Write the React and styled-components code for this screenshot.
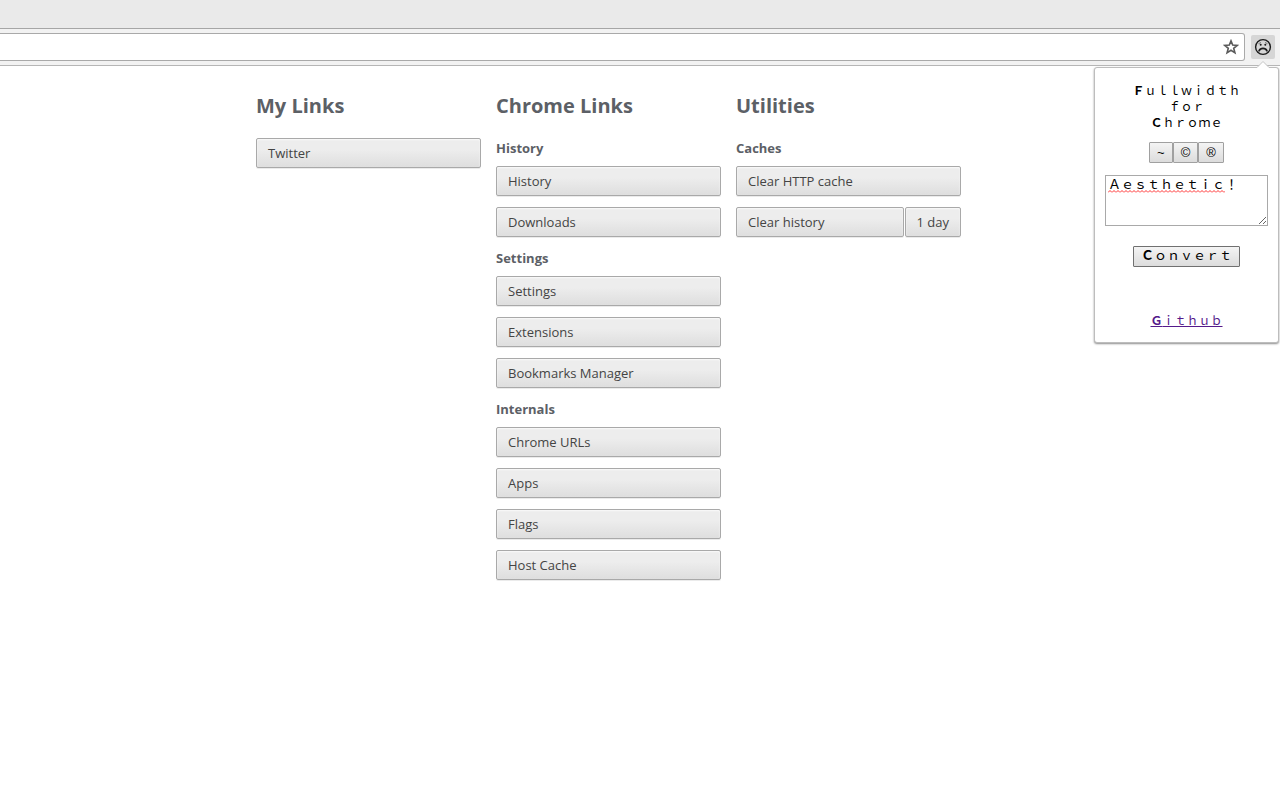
import { useState } from 'react';
import styled, { createGlobalStyle } from 'styled-components';

const linkGroups = [
    { title: 'History', links: ['History', 'Downloads'] },
    { title: 'Settings', links: ['Settings', 'Extensions', 'Bookmarks Manager'] },
    { title: 'Internals', links: ['Chrome URLs', 'Apps', 'Flags', 'Host Cache'] },
];

const StarIcon = () => (
    <svg width="16" height="16" viewBox="0 0 16 16" fill="none" stroke="#5a5a5a" strokeWidth="1.6">
        <path d="M8 1.9 L9.7 6.1 L14.2 6.4 L10.7 9.3 L11.9 13.8 L8 11.3 L4.1 13.8 L5.3 9.3 L1.8 6.4 L6.3 6.1 Z" />
    </svg>
);

const FrownIcon = () => (
    <svg width="18" height="18" viewBox="0 0 18 18" fill="none" stroke="#1c1c1c" strokeLinecap="round">
        <circle cx="9" cy="9" r="7.4" strokeWidth="1.4" />
        <path d="M4.8 5.6 L6.6 4.6 M13.2 5.6 L11.4 4.6" strokeWidth="0.5" />
        <circle cx="6.7" cy="6.8" r="1" fill="#1c1c1c" stroke="none" />
        <circle cx="11.3" cy="6.8" r="1" fill="#1c1c1c" stroke="none" />
        <path d="M5 12.8 C6.6 9.6 11.4 9.6 13 12.8" strokeWidth="1.6" />
    </svg>
);

const Popup = () => {
    const [text, setText] = useState('Ａｅｓｔｈｅｔｉｃ！');

    return (
        <PopupStyle>
            <Arrow width="12" height="7" viewBox="0 0 12 7">
                <path d="M0 6.5 L6 0.5 L12 6.5 V7 H0 Z" fill="#fff" />
                <path d="M0 6.5 L6 0.5 L12 6.5" fill="none" stroke="#c4c4c4" />
            </Arrow>
            <PopupTitle>
                <TitleLine $capital>Ｆｕｌｌｗｉｄｔｈ</TitleLine>
                <TitleLine>ｆｏｒ</TitleLine>
                <TitleLine $capital>Ｃｈｒｏｍｅ</TitleLine>
            </PopupTitle>
            <SymbolRow>
                <SymbolButton type="button">~</SymbolButton>
                <SymbolButton type="button">©</SymbolButton>
                <SymbolButton type="button">®</SymbolButton>
            </SymbolRow>
            <TextWrap>
                <TextBox aria-label="Text" spellCheck="false" value={text} onChange={(e) => setText(e.target.value)} />
                <Squiggle width="117" height="3">
                    <defs>
                        <pattern id="wave" width="4" height="3" patternUnits="userSpaceOnUse">
                            <path d="M0 2.5 L2 0.5 L4 2.5" fill="none" stroke="#ff3030" />
                        </pattern>
                    </defs>
                    <rect width="117" height="3" fill="url(#wave)" />
                </Squiggle>
            </TextWrap>
            <ConvertButton type="button">Ｃｏｎｖｅｒｔ</ConvertButton>
            <GithubLink href="#github">Ｇｉｔｈｕｂ</GithubLink>
        </PopupStyle>
    );
};

export default function App() {
    return (
        <>
            <GlobalStyle />
            <Header>
                <TabStrip />
                <Toolbar>
                    <Omnibox>
                        <AddressInput aria-label="Address" />
                        <StarButton type="button" aria-label="Bookmark">
                            <StarIcon />
                        </StarButton>
                    </Omnibox>
                    <ExtensionButton type="button" aria-label="Fullwidth">
                        <FrownIcon />
                    </ExtensionButton>
                </Toolbar>
                <Popup />
            </Header>
            <Columns>
                <Column>
                    <ColumnTitle>My Links</ColumnTitle>
                    <Group>
                        <LinkButton>Twitter</LinkButton>
                    </Group>
                </Column>
                <Column>
                    <ColumnTitle>Chrome Links</ColumnTitle>
                    {linkGroups.map((group) => (
                        <Group key={group.title}>
                            <GroupTitle>{group.title}</GroupTitle>
                            {group.links.map((link) => (
                                <LinkButton key={link}>{link}</LinkButton>
                            ))}
                        </Group>
                    ))}
                </Column>
                <Column>
                    <ColumnTitle>Utilities</ColumnTitle>
                    <Group>
                        <GroupTitle>Caches</GroupTitle>
                        <LinkButton>Clear HTTP cache</LinkButton>
                        <SplitRow>
                            <LinkButton $grow>Clear history</LinkButton>
                            <LinkButton>1 day</LinkButton>
                        </SplitRow>
                    </Group>
                </Column>
            </Columns>
        </>
    );
}

const GlobalStyle = createGlobalStyle`
  * {
    box-sizing: border-box;
  }

  body {
    margin: 0;
    background: #fff;
    color: #5c6066;
    font-family: 'Open Sans', 'Noto Sans', sans-serif;
    font-size: 13px;
  }
`;

const Header = styled.header`
  position: relative;
`;

const TabStrip = styled.div`
  height: 29px;
  background: #eaeaea;
  border-bottom: 1px solid #a6a6a6;
`;

const Toolbar = styled.div`
  display: flex;
  align-items: center;
  gap: 6px;
  height: 37px;
  padding-right: 5px;
  background: #f2f2f2;
  border-bottom: 1px solid #b6b6b6;
`;

const Omnibox = styled.div`
  display: flex;
  align-items: center;
  flex: 1;
  height: 28px;
  padding-right: 5px;
  background: #fff;
  border: 1px solid #a9a9a9;
  border-left: none;
  border-radius: 0 3px 3px 0;
`;

const AddressInput = styled.input`
  flex: 1;
  min-width: 0;
  border: none;
  outline: none;
  background: transparent;
`;

const StarButton = styled.button`
  display: flex;
  padding: 0;
  border: none;
  background: none;
`;

const ExtensionButton = styled.button`
  display: flex;
  align-items: center;
  justify-content: center;
  width: 24px;
  height: 24px;
  padding: 0;
  border: none;
  border-radius: 2px;
  background: #d6d6d6;
`;

const Columns = styled.main`
  display: flex;
  gap: 15px;
  padding: 24px 20%;
`;

const Column = styled.section`
  flex: none;
  width: 225px;
`;

const ColumnTitle = styled.h1`
  margin: 0 0 16px;
  font-size: 20px;
  line-height: 32px;
  font-weight: 700;
`;

const Group = styled.div`
  display: flex;
  flex-direction: column;
  gap: 11px;
  margin-bottom: 11px;
`;

const GroupTitle = styled.h2`
  margin: 0 0 -3px;
  font-size: 13px;
  line-height: 20px;
  font-weight: 700;
`;

const SplitRow = styled.div`
  display: flex;
  gap: 1px;
`;

const LinkButton = styled.button`
  flex: ${(props) => (props.$grow ? '1' : 'none')};
  height: 30px;
  padding: 0 11px;
  border: 1px solid #a9a9a9;
  border-radius: 2px;
  background: linear-gradient(#ededed, #ededed 38%, #dedede);
  box-shadow: 0 1px 0 rgba(0, 0, 0, 0.08), inset 0 1px 2px rgba(255, 255, 255, 0.75);
  color: #444;
  font: inherit;
  text-align: left;
`;

const PopupStyle = styled.aside`
  position: absolute;
  top: 67px;
  right: 1px;
  display: flex;
  flex-direction: column;
  align-items: center;
  width: 185px;
  padding: 14px 10px;
  background: #fff;
  border: 1px solid #bdbdbd;
  border-radius: 3px;
  box-shadow: 0 1px 2px rgba(0, 0, 0, 0.45);
  color: #000;
  font-family: 'Noto Sans CJK JP', sans-serif;
  font-size: 12px;
  line-height: 16px;
`;

const Arrow = styled.svg`
  position: absolute;
  top: -7px;
  right: 9px;
`;

const PopupTitle = styled.div`
  margin-bottom: 12px;
`;

const TitleLine = styled.div`
  text-align: center;

  &::first-letter {
    font-weight: ${(props) => (props.$capital ? '700' : '400')};
  }
`;

const SymbolRow = styled.div`
  display: flex;
  margin-bottom: 12px;
`;

const PushButton = styled.button`
  height: 21px;
  padding: 0 7px;
  border: 1px solid #a0a0a0;
  border-radius: 1px;
  background: linear-gradient(#f4f4f4, #dcdcdc);
  color: #000;
  line-height: 16px;
`;

const SymbolButton = styled(PushButton)`
  font-family: 'Liberation Sans', Arial, sans-serif;
  font-size: 13px;
`;

const TextWrap = styled.div`
  position: relative;
  display: flex;
  width: 100%;
  margin-bottom: 20px;
`;

const TextBox = styled.textarea`
  width: 100%;
  height: 51px;
  padding: 0 2px;
  border: 1px solid #a9a9a9;
  outline: none;
  color: #000;
  font-family: inherit;
  font-size: 13px;
  line-height: 16px;
`;

const Squiggle = styled.svg`
  position: absolute;
  top: 15px;
  left: 3px;
`;

const ConvertButton = styled(PushButton)`
  margin-bottom: 45px;
  padding-bottom: 3px;
  border-color: #707070;
  font-family: inherit;
  font-size: 13px;

  &::first-letter {
    font-weight: 700;
  }
`;

const GithubLink = styled.a`
  color: #551a8b;

  &::first-letter {
    font-weight: 700;
  }
`;
